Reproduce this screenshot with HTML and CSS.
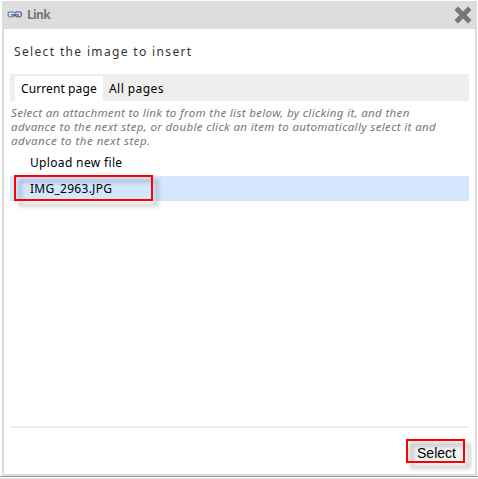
FILE: index.html
```
<!DOCTYPE html>
<html lang="en">
<head>
<meta charset="utf-8">
<title>Link</title>
<link rel="stylesheet" href="styles.css">
</head>
<body>
<div class="dialog">
  <header class="titlebar">
    <svg class="link-icon" width="16" height="10" viewBox="0 0 16 10" fill="none">
      <rect x="1" y="1.8" width="6.5" height="5" rx="2.5" fill="#dce6f5" stroke="#7184a6" stroke-width="1.3"/>
      <rect x="8" y="1.8" width="6.5" height="5" rx="2.5" fill="#dce6f5" stroke="#566b92" stroke-width="1.3"/>
      <path d="M4 4.8h8" stroke="#405680" stroke-width="1.4"/>
      <path d="M4 3.7h8" stroke="#dce6f5" stroke-width=".8"/>
    </svg>
    <span class="name">Link</span>
    <svg class="close" width="18" height="18" viewBox="0 0 18 18">
      <path d="M4 .5 9 5.5 14 .5 17.5 4 12.5 9 17.5 14 14 17.5 9 12.5 4 17.5 .5 14 5.5 9 .5 4Z" fill="#777"/>
    </svg>
  </header>
  <main class="content">
    <h1 class="heading">Select the image to insert</h1>
    <nav class="tabs"><span class="tab active">Current page</span><span class="tab all">All pages</span></nav>
    <p class="hint"><span class="l1">Select an attachment to link to from the list below, by clicking it, and then</span><br><span class="l2">advance to the next step, or double click an item to automatically select it and</span><br><span class="l3">advance to the next step.</span></p>
    <ul class="files">
      <li class="file upload">Upload new file</li>
      <li class="file selected">IMG_2963.JPG<span class="mark"></span></li>
    </ul>
    <footer class="actions"><button class="select">Select<span class="mark"></span></button></footer>
  </main>
</div>
<div class="edge"></div>
</body>
</html>
```
FILE: styles.css
```
* { box-sizing: border-box; }
body {
  margin: 0;
  height: 479px;
  padding: 1px 0 0;
  overflow: hidden;
  background: #fff;
  color: #000;
  font: 12px/14px "Noto Sans", "Open Sans", sans-serif;
  white-space: nowrap;
}
.dialog {
  display: flex;
  flex-direction: column;
  width: 475px;
  height: 475px;
  margin-left: 2px;
  border: 2px solid #ddd;
  border-top: 0;
}
.titlebar {
  display: flex;
  align-items: center;
  flex: 0 0 28px;
  padding: 0 3px 1px 3px;
  background: #ddd;
}
.name { margin-left: 4px; color: #777; font-weight: bold; letter-spacing: -.6px; }
.close { margin-left: auto; }
.content { display: flex; flex-direction: column; flex: 1; padding: 0 6px; }
.heading { margin: 15px 0 0 4px; font-size: 12px; line-height: 16px; font-weight: normal; letter-spacing: 1.35px; color: #333; }
.tabs { display: flex; height: 27px; margin-top: 14px; padding: 2px 0 0 5px; background: #eee; }
.tab { padding: 0 6px; line-height: 25px; }
.active { width: 88px; background: #fff; letter-spacing: .1px; }
.all { letter-spacing: .45px; }
.hint { margin: 5px 0 0 1px; color: #777; font-size: 11.5px; font-style: italic; }
.l1 { letter-spacing: .34px; }
.l2 { letter-spacing: .36px; }
.l3 { letter-spacing: .5px; }
.files { list-style: none; margin: 2px 0 0; padding: 0; }
.file { position: relative; height: 26px; padding-left: 20px; line-height: 26px; }
.upload { letter-spacing: .34px; }
.selected { height: 25px; line-height: 25px; background: #d4e7ff; letter-spacing: .27px; }
.mark { position: absolute; left: 4px; top: -1px; width: 139px; height: 26px; border: 2px solid #f00; filter: drop-shadow(5px 5px 2px rgba(0,0,0,.32)); }
.actions { display: flex; justify-content: flex-end; margin-top: auto; height: 48px; padding: 11px 4px 0 0; border-top: 2px solid #eee; }
.select { position: relative; width: 59px; height: 24px; padding: 4px 0 0 2px; border: 0; background: #f2f2f2; font: 14px/20px "Liberation Sans", sans-serif; }
.select .mark { inset: 0; width: auto; height: auto; }
.edge { height: 3px; border-top: 1px solid #999; border-bottom: 1px solid #e8e8e8; }
```
